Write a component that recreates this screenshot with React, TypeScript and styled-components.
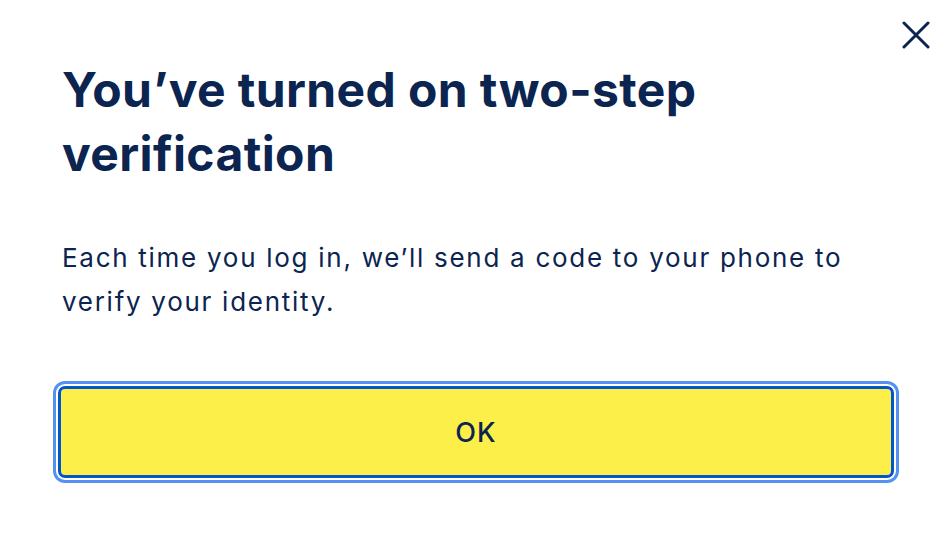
import React from 'react';
import styled, { createGlobalStyle } from 'styled-components';

const GlobalStyle = createGlobalStyle`
  html, body {
    margin: 0;
    padding: 0;
    background: #ffffff;
  }
  body {
    font-family: Inter, "Liberation Sans", sans-serif;
    color: #0b2450;
  }
`;

const Dialog = styled.div`
  position: relative;
  width: 952px;
  height: 540px;
  box-sizing: border-box;
  padding: 58px 58px 0;
  background: #ffffff;
`;

const Close = styled.button`
  position: absolute;
  top: 17px;
  right: 18px;
  width: 36px;
  height: 36px;
  padding: 0;
  border: none;
  background: transparent;
  display: flex;
  align-items: center;
  justify-content: center;
  cursor: pointer;
`;

const Content = styled.div`
  padding: 0 4px;
`;

const Title = styled.h1`
  margin: 0;
  font-size: 48px;
  line-height: 64px;
  font-weight: 700;
  letter-spacing: 0.4px;
`;

const Body = styled.p`
  margin: 50px 0 0;
  font-size: 26px;
  line-height: 44px;
  font-weight: 400;
  letter-spacing: 1.72px;
`;

const OkButton = styled.button`
  display: flex;
  align-items: center;
  justify-content: center;
  width: 100%;
  height: 92px;
  margin-top: 62px;
  box-sizing: border-box;
  border: 3px solid #0055d0;
  border-radius: 7px;
  background: #fdef4a;
  color: #0b2450;
  font-family: Inter, "Liberation Sans", sans-serif;
  font-size: 27px;
  font-weight: 500;
  letter-spacing: 1px;
  box-shadow: 0 0 0 2px #ffffff, 0 0 0 5px #5591f0;
  cursor: pointer;
`;

export default function App() {
  return (
    <>
      <GlobalStyle />
      <Dialog>
        <Close aria-label="Close">
          <svg width="28" height="28" viewBox="0 0 28 28" fill="none">
            <path d="M2 2L26 26M26 2L2 26" stroke="#0b2450" strokeWidth="3" strokeLinecap="round" />
          </svg>
        </Close>
        <Content>
          <Title>You’ve turned on two-step verification</Title>
          <Body>Each time you log in, we’ll send a code to your phone to verify your identity.</Body>
        </Content>
        <OkButton>OK</OkButton>
      </Dialog>
    </>
  );
}
